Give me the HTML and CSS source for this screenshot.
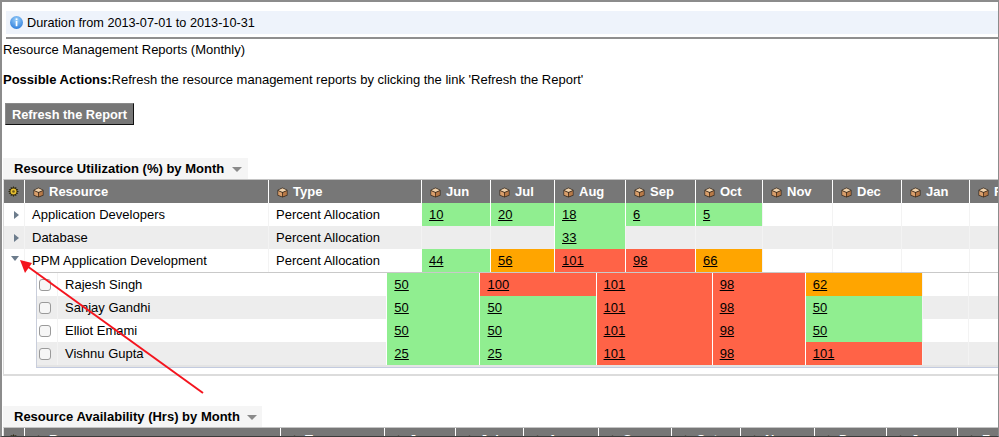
FILE: index.html
```html
<!DOCTYPE html>
<html lang="en">
<head>
    <meta charset="UTF-8">
    <title>Resource Management Reports</title>
    <link rel="stylesheet" href="styles.css">
</head>
<body>

<svg width="0" height="0" class="defs">
    <symbol id="cube" viewBox="0 0 11 11">
        <path d="M5.5 .5 10.5 3v5.5L5.5 10.5 .5 8.5V3z" fill="#3a2a1c"/>
        <path d="M5.5 1.3 9.6 3.2 5.5 5 1.4 3.2z" fill="#f0d2ac"/>
        <path d="M1.2 3.9 5.1 5.7V9.6L1.2 8z" fill="#d99f6c"/>
        <path d="M9.8 3.9 5.9 5.7V9.6L9.8 8z" fill="#b87a48"/>
    </symbol>
    <symbol id="gear" viewBox="0 0 11 11">
        <path d="M5.5 0 6.4 1.8 8.3 .9 8.2 2.9 10.3 3 9 4.6 11 5.5 9 6.4 10.3 8 8.2 8.1 8.3 10.1 6.4 9.2 5.5 11 4.6 9.2 2.7 10.1 2.8 8.1.7 8 2 6.4 0 5.5 2 4.6.7 3 2.8 2.9 2.7.9 4.6 1.8z" fill="#2e2810"/>
        <circle cx="5.5" cy="5.5" r="3" fill="#e8c030"/>
        <circle cx="5.5" cy="5.5" r="1.3" fill="#6e5a18"/>
    </symbol>
</svg>

<div class="page">
    <div class="info-bar">
        <svg class="info-icon" width="13" height="13" viewBox="0 0 13 13">
            <defs>
                <radialGradient id="infoFill" cx="50%" cy="30%" r="70%">
                    <stop offset="0" stop-color="#9cd0fa"/>
                    <stop offset="1" stop-color="#2f7fdc"/>
                </radialGradient>
            </defs>
            <circle cx="6.5" cy="6.5" r="6.5" fill="url(#infoFill)"/>
            <rect x="5.7" y="2.4" width="1.7" height="1.7" fill="#fff"/>
            <rect x="5.7" y="5" width="1.7" height="5.2" fill="#fff"/>
        </svg>
        Duration from 2013-07-01 to 2013-10-31
    </div>
    <div class="bar-rule"></div>

    <p class="report-title">Resource Management Reports (Monthly)</p>
    <p class="actions"><b>Possible Actions:</b>Refresh the resource management reports by clicking the link 'Refresh the Report'</p>
    <button type="button" class="refresh">Refresh the Report</button>

    <div class="tab tab-first">Resource Utilization (%) by Month <span class="caret"></span></div>
    <div class="grid-box">
        <table class="grid util">
            <colgroup>
                <col class="c20"><col class="c244"><col class="c153">
                <col class="c69"><col class="c64"><col class="c71"><col class="c70"><col class="c67">
                <col class="c70"><col class="c69"><col class="c68"><col class="c71">
            </colgroup>
            <thead>
                <tr>
                    <th class="gear-cell"><svg class="gear"><use href="#gear"/></svg></th>
                    <th><svg class="cube"><use href="#cube"/></svg>Resource</th>
                    <th><svg class="cube"><use href="#cube"/></svg>Type</th>
                    <th><svg class="cube"><use href="#cube"/></svg>Jun</th>
                    <th><svg class="cube"><use href="#cube"/></svg>Jul</th>
                    <th><svg class="cube"><use href="#cube"/></svg>Aug</th>
                    <th><svg class="cube"><use href="#cube"/></svg>Sep</th>
                    <th><svg class="cube"><use href="#cube"/></svg>Oct</th>
                    <th><svg class="cube"><use href="#cube"/></svg>Nov</th>
                    <th><svg class="cube"><use href="#cube"/></svg>Dec</th>
                    <th><svg class="cube"><use href="#cube"/></svg>Jan</th>
                    <th><svg class="cube"><use href="#cube"/></svg>Feb</th>
                </tr>
            </thead>
            <tbody>
                <tr>
                    <td class="toggle"><span class="tri-right"></span></td>
                    <td>Application Developers</td>
                    <td>Percent Allocation</td>
                    <td class="ok"><a href="#">10</a></td>
                    <td class="ok"><a href="#">20</a></td>
                    <td class="ok"><a href="#">18</a></td>
                    <td class="ok"><a href="#">6</a></td>
                    <td class="ok"><a href="#">5</a></td>
                    <td></td><td></td><td></td><td></td>
                </tr>
                <tr class="alt">
                    <td class="toggle"><span class="tri-right"></span></td>
                    <td>Database</td>
                    <td>Percent Allocation</td>
                    <td></td>
                    <td></td>
                    <td class="ok"><a href="#">33</a></td>
                    <td></td><td></td><td></td><td></td><td></td><td></td>
                </tr>
                <tr>
                    <td class="toggle"><span class="tri-down"></span></td>
                    <td>PPM Application Development</td>
                    <td>Percent Allocation</td>
                    <td class="ok"><a href="#">44</a></td>
                    <td class="warn"><a href="#">56</a></td>
                    <td class="over"><a href="#">101</a></td>
                    <td class="over"><a href="#">98</a></td>
                    <td class="warn"><a href="#">66</a></td>
                    <td></td><td></td><td></td><td></td>
                </tr>
            </tbody>
        </table>

        <div class="sub-wrap">
            <table class="grid sub">
                <colgroup>
                    <col class="c20"><col class="c329">
                    <col class="c93"><col class="c116"><col class="c116"><col class="c93">
                    <col class="c117"><col class="c46"><col class="c46">
                </colgroup>
                <tbody>
                    <tr>
                        <td class="check"><span class="box"></span></td>
                        <td>Rajesh Singh</td>
                        <td class="ok"><a href="#">50</a></td>
                        <td class="over"><a href="#">100</a></td>
                        <td class="over"><a href="#">101</a></td>
                        <td class="over"><a href="#">98</a></td>
                        <td class="warn"><a href="#">62</a></td>
                        <td></td><td></td>
                    </tr>
                    <tr class="alt">
                        <td class="check"><span class="box"></span></td>
                        <td>Sanjay Gandhi</td>
                        <td class="ok"><a href="#">50</a></td>
                        <td class="ok"><a href="#">50</a></td>
                        <td class="over"><a href="#">101</a></td>
                        <td class="over"><a href="#">98</a></td>
                        <td class="ok"><a href="#">50</a></td>
                        <td></td><td></td>
                    </tr>
                    <tr>
                        <td class="check"><span class="box"></span></td>
                        <td>Elliot Emami</td>
                        <td class="ok"><a href="#">50</a></td>
                        <td class="ok"><a href="#">50</a></td>
                        <td class="over"><a href="#">101</a></td>
                        <td class="over"><a href="#">98</a></td>
                        <td class="ok"><a href="#">50</a></td>
                        <td></td><td></td>
                    </tr>
                    <tr class="alt">
                        <td class="check"><span class="box"></span></td>
                        <td>Vishnu Gupta</td>
                        <td class="ok"><a href="#">25</a></td>
                        <td class="ok"><a href="#">25</a></td>
                        <td class="over"><a href="#">101</a></td>
                        <td class="over"><a href="#">98</a></td>
                        <td class="over"><a href="#">101</a></td>
                        <td></td><td></td>
                    </tr>
                </tbody>
            </table>
        </div>
    </div>

    <div class="tab tab-second">Resource Availability (Hrs) by Month <span class="caret"></span></div>
    <div class="grid-box grid-box-open">
        <table class="grid avail">
            <colgroup>
                <col class="c20"><col class="c256"><col class="c104">
                <col class="c71"><col class="c68"><col class="c75"><col class="c73"><col class="c69">
                <col class="c74"><col class="c72"><col class="c71"><col class="c71">
            </colgroup>
            <thead>
                <tr>
                    <th class="gear-cell"><svg class="gear"><use href="#gear"/></svg></th>
                    <th><svg class="cube"><use href="#cube"/></svg>Resource</th>
                    <th><svg class="cube"><use href="#cube"/></svg>Type</th>
                    <th><svg class="cube"><use href="#cube"/></svg>Jun</th>
                    <th><svg class="cube"><use href="#cube"/></svg>Jul</th>
                    <th><svg class="cube"><use href="#cube"/></svg>Aug</th>
                    <th><svg class="cube"><use href="#cube"/></svg>Sep</th>
                    <th><svg class="cube"><use href="#cube"/></svg>Oct</th>
                    <th><svg class="cube"><use href="#cube"/></svg>Nov</th>
                    <th><svg class="cube"><use href="#cube"/></svg>Dec</th>
                    <th><svg class="cube"><use href="#cube"/></svg>Jan</th>
                    <th><svg class="cube"><use href="#cube"/></svg>Feb</th>
                </tr>
            </thead>
        </table>
    </div>

    <svg class="callout" width="999" height="437" viewBox="0 0 999 437">
        <line x1="203" y1="393" x2="27" y2="266" stroke="#f4141e" stroke-width="2"/>
        <polygon points="20,260 32,263 25,273" fill="#f4141e"/>
    </svg>
</div>

</body>
</html>
```

FILE: styles.css
```css
html, body {
    margin: 0;
    height: 100%;
    overflow: hidden;
    background-color: #ffffff;
}

body {
    font-family: "Liberation Sans", Arial, sans-serif;
    font-size: 13px;
    color: #000000;
}

.defs {
    display: block;
    height: 0;
}

.page {
    position: relative;
    height: 434px;
    border-top: 2px solid #8c8c8c;
    border-left: 2px solid #8c8c8c;
    border-right: 1px solid #8c8c8c;
    border-bottom: 1px solid #3c3c3c;
    overflow: hidden;
}

.info-bar {
    display: flex;
    align-items: center;
    gap: 4px;
    height: 23px;
    margin: 9px 0 0 4px;
    padding-left: 4px;
    font-size: 12.7px;
    background-color: #eef3fb;
}

.bar-rule {
    height: 2px;
    margin: 3px 0 0 4px;
    background-color: #8f8f8f;
}

.report-title {
    margin: 3px 0 0 1px;
    line-height: 15px;
}

.actions {
    margin: 15px 0 0 1px;
    line-height: 15px;
}

.actions b {
    font-weight: bold;
}

.refresh {
    display: block;
    height: 22px;
    width: 129px;
    margin: 16px 0 0 3px;
    padding: 0;
    font-family: inherit;
    font-size: 12.8px;
    font-weight: bold;
    color: #ffffff;
    background-color: #777777;
    border: 1px solid #8a8a8a;
    border-right-color: #111111;
    border-bottom-color: #111111;
}

.tab {
    display: flex;
    align-items: center;
    height: 21px;
    margin-left: 1px;
    padding-left: 11px;
    box-sizing: border-box;
    font-weight: bold;
    background-color: #f5f5f5;
    white-space: pre;
}

.tab-first {
    width: 245px;
    margin-top: 33px;
}

.tab-second {
    width: 259px;
    margin-top: 30px;
}

.caret {
    display: inline-block;
    width: 0;
    height: 0;
    margin-left: 4px;
    margin-top: 2px;
    border-left: 5px solid transparent;
    border-right: 5px solid transparent;
    border-top: 5px solid #8a8a8a;
}

.grid-box {
    margin-left: 1px;
    padding-bottom: 6px;
    border-top: 1px solid #c4c4c4;
    border-left: 1px solid #dcdcdc;
    border-bottom: 2px solid #dcdcdc;
    overflow: hidden;
}

.grid-box-open {
    border-bottom: none;
    padding: 0;
}

.grid {
    border-collapse: separate;
    border-spacing: 0;
    table-layout: fixed;
    font-size: 13px;
    background-color: #ffffff;
}

.util {
    width: 1036px;
}

.avail {
    width: 1024px;
}

.c20 { width: 20px; }
.c46 { width: 46px; }
.c64 { width: 64px; }
.c67 { width: 67px; }
.c68 { width: 68px; }
.c69 { width: 69px; }
.c70 { width: 70px; }
.c71 { width: 71px; }
.c72 { width: 72px; }
.c73 { width: 73px; }
.c74 { width: 74px; }
.c75 { width: 75px; }
.c93 { width: 93px; }
.c104 { width: 104px; }
.c116 { width: 116px; }
.c117 { width: 117px; }
.c153 { width: 153px; }
.c244 { width: 244px; }
.c256 { width: 256px; }
.c329 { width: 329px; }

.grid th {
    height: 23px;
    padding: 0 0 0 8px;
    box-sizing: border-box;
    text-align: left;
    font-weight: bold;
    color: #ffffff;
    background-color: #777777;
    border-left: 1px solid #ffffff;
    white-space: nowrap;
    overflow: hidden;
}

.grid th.gear-cell {
    padding: 0 0 0 4px;
    border-left: none;
}

.gear {
    display: block;
    width: 11px;
    height: 11px;
}

.cube {
    width: 11px;
    height: 11px;
    margin-right: 5px;
    vertical-align: -2px;
}

.grid td {
    height: 23px;
    padding: 0 0 0 7px;
    box-sizing: border-box;
    border-left: 1px solid #f3f3f3;
    white-space: nowrap;
    overflow: hidden;
}

.grid tr.alt td {
    background-color: #ededed;
}

.grid td:first-child {
    border-left: none;
}

.grid td.ok,
.grid tr.alt td.ok {
    background-color: #90ee90;
    border-left-color: #ffffff;
}

.grid td.warn {
    background-color: #ffa500;
    border-left-color: #ffffff;
}

.grid td.over,
.grid tr.alt td.over {
    background-color: #ff6347;
    border-left-color: #ffffff;
}

.grid a {
    color: #000000;
    text-decoration: underline;
}

.tri-right {
    display: block;
    width: 0;
    height: 0;
    margin-left: 3px;
    border-top: 4px solid transparent;
    border-bottom: 4px solid transparent;
    border-left: 5px solid #6c7c8c;
}

.tri-down {
    display: block;
    width: 0;
    height: 0;
    border-left: 4px solid transparent;
    border-right: 4px solid transparent;
    border-top: 5px solid #6c7c8c;
    margin-top: -4px;
}

.sub-wrap {
    margin-left: 32px;
    padding-bottom: 2px;
    border-top: 1px solid #c9c9c9;
    border-left: 1px solid #c9cedb;
    border-bottom: 1px solid #c3cbdf;
    background-color: #e4e4e4;
    overflow: hidden;
}

.sub {
    width: 977px;
}

.check {
    padding: 0 0 0 2px !important;
}

.box {
    display: block;
    width: 12px;
    height: 12px;
    box-sizing: border-box;
    background-color: #f6f6f6;
    border: 1px solid #9a9a9a;
    border-radius: 3px;
}

.callout {
    position: absolute;
    left: -2px;
    top: -2px;
    pointer-events: none;
}
```
